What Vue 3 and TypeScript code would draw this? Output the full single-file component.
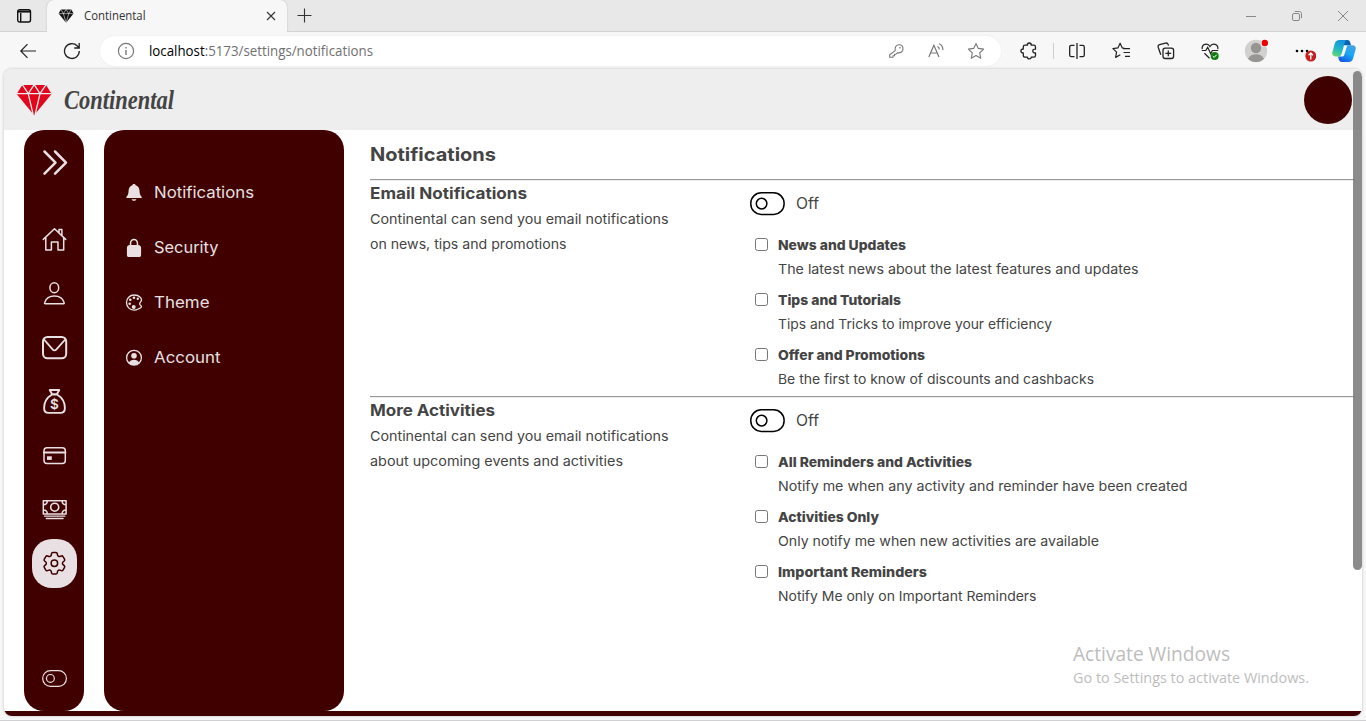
<script setup lang="ts">
interface Choice { title: string; titleWidth: number; text: string; textWidth: number }
interface Group { title: string; titleWidth: number; lines: { text: string; width: number }[]; choices: Choice[] }

const groups: Group[] = [
  {
    title: 'Email Notifications', titleWidth: 157,
    lines: [
      { text: 'Continental can send you email notifications', width: 298.5 },
      { text: 'on news, tips and promotions', width: 196.5 },
    ],
    choices: [
      { title: 'News and Updates', titleWidth: 128, text: 'The latest news about the latest features and updates', textWidth: 360.5 },
      { title: 'Tips and Tutorials', titleWidth: 123, text: 'Tips and Tricks to improve your efficiency', textWidth: 274 },
      { title: 'Offer and Promotions', titleWidth: 147, text: 'Be the first to know of discounts and cashbacks', textWidth: 316 },
    ],
  },
  {
    title: 'More Activities', titleWidth: 125,
    lines: [
      { text: 'Continental can send you email notifications', width: 298.5 },
      { text: 'about upcoming events and activities', width: 253 },
    ],
    choices: [
      { title: 'All Reminders and Activities', titleWidth: 194, text: 'Notify me when any activity and reminder have been created', textWidth: 409.5 },
      { title: 'Activities Only', titleWidth: 101, text: 'Only notify me when new activities are available', textWidth: 321 },
      { title: 'Important Reminders', titleWidth: 149, text: 'Notify Me only on Important Reminders', textWidth: 258.5 },
    ],
  },
]

const rail: { name: string; svg: string; active?: boolean }[] = [
  { name: 'Home', svg: '<path stroke-width="1.5" d="M3.3 13.4 14.5 2.8l11.2 10.6M5.8 11.5V24h5.6v-8H18v8h5.7V11.5M19 6.5V3.4h2.9v6"/>' },
  { name: 'Profile', svg: '<ellipse cx="14.3" cy="7.8" rx="4.4" ry="5" stroke-width="1.5"/><path stroke-width="1.5" d="M5.3 23.7c-.7 0-.9-.5-.6-1.3 1.3-4 5.2-6.5 9.7-6.5s8.4 2.5 9.7 6.5c.3.8.1 1.3-.6 1.3z"/>' },
  { name: 'Mail', svg: '<rect x="3" y="3" width="23.2" height="21.3" rx="4.5" stroke-width="2"/><path stroke-width="1.8" d="m4 5.5 8.8 10.1c1 1.1 2.4 1.1 3.4 0L25.2 5.5"/>' },
  { name: 'Savings', svg: '<path stroke-width="1.9" d="M9.7 2h9.6l-2.5 4.300h-4.600zM12 6.500C7 9.500 4.100 14.500 4.100 20c0 3.600 1.700 4.900 4.600 4.900h11.600c2.900 0 4.600-1.300 4.600-4.900 0-5.500-2.900-10.500-7.900-13.500z"/><text x="14.500" y="21.300" text-anchor="middle" font-family="Inter, sans-serif" font-size="13.500" font-weight="600" fill="#e8e0e2" stroke="none">$</text>' },
  { name: 'Cards', svg: '<rect x="4" y="5.7" width="21.3" height="15.8" rx="3" stroke-width="1.5"/><path stroke-width="2.2" d="M4 10.5h21.3"/><path fill="#e8e0e2" stroke="none" d="M7 14.3h4.8v3.6H7z"/>' },
  { name: 'Cash', svg: '<path stroke-width="1.5" d="M3.3 4.7h22.8v13.2H3.3zM3.3 8.7c2.5 0 4-1.5 4-4M22.1 4.7c0 2.5 1.5 4 4 4M3.3 13.9c2.5 0 4 1.5 4 4M22.1 17.9c0-2.5 1.5-4 4-4"/><circle cx="14.7" cy="11.2" r="4" stroke-width="1.6"/><path stroke-width="1.3" d="M4.6 20.2h20.2M6.3 22.5h16.800"/>' },
  { name: 'Settings', active: true, svg: '<g transform="translate(0 -1.1) scale(1.2)" stroke-width="1.25"><path d="M9.594 3.94c.09-.542.56-.94 1.11-.94h2.593c.55 0 1.02.398 1.11.94l.213 1.281c.063.374.313.686.645.87.074.04.147.083.22.127.325.196.72.257 1.075.124l1.217-.456a1.125 1.125 0 0 1 1.37.49l1.296 2.247a1.125 1.125 0 0 1-.26 1.431l-1.003.827c-.293.241-.438.613-.43.992a7.723 7.723 0 0 1 0 .255c-.008.378.137.75.43.991l1.004.827c.424.35.534.955.26 1.43l-1.298 2.247a1.125 1.125 0 0 1-1.369.491l-1.217-.456c-.355-.133-.75-.072-1.076.124a6.47 6.47 0 0 1-.22.128c-.331.183-.581.495-.644.869l-.213 1.281c-.09.543-.56.94-1.11.94h-2.594c-.55 0-1.019-.398-1.11-.94l-.213-1.281c-.062-.374-.312-.686-.644-.87a6.52 6.52 0 0 1-.22-.127c-.325-.196-.72-.257-1.076-.124l-1.217.456a1.125 1.125 0 0 1-1.369-.49l-1.297-2.247a1.125 1.125 0 0 1 .26-1.431l1.004-.827c.292-.24.437-.613.43-.991a6.932 6.932 0 0 1 0-.255c.007-.38-.138-.751-.43-.992l-1.004-.827a1.125 1.125 0 0 1-.26-1.43l1.297-2.247a1.125 1.125 0 0 1 1.37-.491l1.216.456c.356.133.751.072 1.076-.124.072-.044.146-.086.22-.128.332-.183.582-.495.644-.869z"/><circle cx="12" cy="12" r="2.7"/></g>' },
]

const menu = [
  { label: 'Notifications', width: 100, svg: '<path d="M9 .9c.9 0 1.5.5 1.6 1.3 2.5.7 3.8 2.7 3.9 5.3.1 3.2.7 5 2.2 6.3v1.3H1.4v-1.3c1.5-1.3 2.1-3.1 2.200-6.300.1-2.600 1.400-4.600 3.800-5.300C7.500 1.400 8.100.9 9 .9zM6.600 16.300h4.800c-.4 1-1.200 1.500-2.400 1.500s-2-.5-2.400-1.500z"/>' },
  { label: 'Security', width: 64.5, svg: '<path d="M4.8 7V5.300C4.800 2.600 6.600.8 9 .8s4.200 1.800 4.200 4.500V7c2 .2 2.900 1.100 2.900 3.200v6.200c0 2-1 2.900-3 2.900H4.900c-2 0-3-.9-3-2.900v-6.200c0-2.100.9-3 2.900-3.200zm1.500 0h5.400V5.200c0-1.800-1.100-3-2.700-3S6.300 3.400 6.300 5.200z"/>' },
  { label: 'Theme', width: 55.5, svg: '<g transform="translate(0 .5)"><path fill="none" stroke="currentColor" stroke-width="1.3" d="M9.2 1.500C4.700 1.500 1.500 4.800 1.500 9s3.200 7.600 7.500 7.600c1.500 0 2.600-.3 4.200-1.100 1.900-.9 3.200-.9 3.200-2.200 0-1.200-1.200-1.500-1.700-2.600-.4-1.100.4-1.700 1.100-2.600 1-1.300.8-3-.6-4.400-1.500-1.500-3.600-2.200-6-2.200z"/><circle cx="9" cy="4.200" r="1.300"/><circle cx="12.800" cy="5.300" r="1.200"/><circle cx="5.300" cy="6.200" r="1.300"/><circle cx="4.700" cy="10.200" r="1.300"/><circle cx="8.700" cy="13.500" r="2"/></g>' },
  { label: 'Account', width: 66.5, svg: '<g transform="translate(0 .8)"><circle cx="9" cy="9" r="7.4" fill="none" stroke="currentColor" stroke-width="1.3"/><circle cx="9" cy="6.900" r="2.800"/><path d="M3.800 14.200c.8-2.300 2.900-3.300 5.200-3.300s4.400 1 5.200 3.300C12.700 15.700 11 16.300 9 16.300s-3.700-.6-5.200-2.100z"/></g>' },
]

// Stretches or condenses a label so that it takes exactly the given width.
const vFit = {
  mounted(el: HTMLElement, binding: { value: number }) {
    const natural = el.getBoundingClientRect().width
    el.style.transform = `scaleX(${binding.value / natural})`
  },
}
</script>

<template>
  <div class="window">
    <div class="titlebar">
      <div class="workspaces">
        <svg width="16" height="16" viewBox="0 0 16 16" fill="none" stroke="#111" stroke-width="1.4"><rect x="1.7" y="1.7" width="12.8" height="12.3" rx="2" /><path d="M1.7 3.600h12.800" stroke-width="2" /><path d="M4.700 5v9" /></svg>
      </div>
      <div class="tab">
        <svg class="favicon" width="16" height="14" viewBox="0 0 36 32"><path fill="#111" d="M6.5 1h23.800l5 9.500-17 21L1 10.500z" /><path fill="none" stroke="#f7f7f7" stroke-width="1.3" d="M1 10.500h34.500M6.500 1l5.500 9.500L18.300 1l6 9.500L30 1M12 10.500l6.300 21 6-21" /></svg>
        <span class="tab-title"><span v-fit="61.5" class="fit">Continental</span></span>
        <svg class="close" width="10" height="10" viewBox="0 0 10 10" stroke="#333" stroke-width="1.1"><path d="m1 1 8 8M9 1 1 9" /></svg>
      </div>
      <svg class="plus" width="15" height="15" viewBox="0 0 15 15" stroke="#333" stroke-width="1.1"><path d="M7.5.5v14M.5 7.500h14" /></svg>
      <div class="controls">
        <svg width="12" height="12" viewBox="0 0 12 12" fill="none" stroke="#888"><path d="M1 6.500h10" /></svg>
        <svg width="12" height="12" viewBox="0 0 12 12" fill="none" stroke="#888"><rect x="1.5" y="3.500" width="7" height="7" rx="1.500" /><path d="M3.800 1.500h4.400c1.400 0 2.300.9 2.300 2.300v4.400" /></svg>
        <svg width="12" height="12" viewBox="0 0 12 12" fill="none" stroke="#888"><path d="m1 1 10 10M11 1 1 11" /></svg>
      </div>
    </div>

    <div class="toolbar">
      <svg class="back" width="18" height="16" viewBox="0 0 18 16" fill="none" stroke="#222" stroke-width="1.2"><path d="M8.500 1.200 1.800 8l6.700 6.800M2 8h15" /></svg>
      <svg class="reload" width="18" height="18" viewBox="0 0 18 18" fill="none" stroke="#222" stroke-width="1.300"><path d="M16.300 9a7.400 7.400 0 1 1-2.200-5.200l2 2M16.200 1v5h-5" /></svg>
      <div class="address">
        <svg width="18" height="18" viewBox="0 0 18 18" fill="none" stroke="#777"><circle cx="9" cy="9" r="7.600" stroke-width="1.200" /><path d="M9 8v5M9 5v1.500" stroke-width="1.400" /></svg>
        <span class="url"><span v-fit="224" class="fit"><b>localhost</b>:5173/settings/notifications</span></span>
        <div class="address-icons">
          <svg width="18" height="18" viewBox="0 0 18 18" fill="none" stroke="#777" stroke-width="1.100" stroke-linejoin="round"><path d="M8.200 8.600C7.600 5.300 9 2.700 12 2.700c2.500 0 4 1.700 4 4 0 2.900-2.300 4.700-5.600 4.100L9 12.200H7.500v1.600H6v1.500H2.700v-2.600z" /><circle cx="13" cy="5.800" r=".8" fill="#777" stroke="none" /></svg>
          <svg width="18" height="18" viewBox="0 0 18 18" fill="none" stroke="#777" stroke-width="1.200"><path d="M1.800 15 6.900 3.200 12 15M3.600 11h6.600M10.500 4.500c1.200.6 1.700 1.500 1.800 2.900M12 1.700c2.700 1 3.900 3.200 3.900 6.200" /></svg>
          <svg width="18" height="18" viewBox="0 0 18 18" fill="none" stroke="#777" stroke-width="1.100" stroke-linejoin="round"><path d="m9 1.500 2.300 4.900 5.300.7-3.900 3.700 1 5.400L9 13.600l-4.700 2.600 1-5.400-3.900-3.700 5.300-.7z" /></svg>
        </div>
      </div>
      <div class="tools">
        <svg class="extensions" width="20" height="20" viewBox="0 0 20 20" fill="none" stroke="#222" stroke-width="1.300" stroke-linejoin="round"><path d="M8.300 4.200c0-1.500.8-2.200 2-2.200s2 .7 2 2.200h2.500c1 0 1.700.7 1.700 1.700v2.300c-1.800-.2-2.700.6-2.700 1.900s.9 2 2.700 1.900v2.500c0 1-.7 1.700-1.700 1.700h-2.600c0 1-.7 1.700-1.900 1.700s-1.900-.7-1.900-1.700H6c-1 0-1.700-.7-1.700-1.700V12c-1.600 0-2.400-.8-2.400-2s.8-2 2.400-2V5.900c0-1 .7-1.700 1.700-1.700z" /></svg>
        <i class="divider"></i>
        <svg width="20" height="20" viewBox="0 0 20 20" fill="none" stroke="#222" stroke-width="1.300"><path d="M7.500 4.400H4.300c-1 0-1.600.6-1.600 1.600v8c0 1 .6 1.600 1.600 1.600h3.200M12.500 4.400h3.200c1 0 1.600.6 1.600 1.600v8c0 1-.6 1.600-1.600 1.600h-3.200M10 2v16" /></svg>
        <svg width="20" height="20" viewBox="0 0 20 20" fill="none" stroke="#222" stroke-width="1.200" stroke-linejoin="round"><path d="m12.500 7.300-2.200-.4L8.100 2.200 5.900 6.900l-5 .7 3.700 3.500-1 5.300 4.700-2.600M11 7.700h7M11.500 11.500h6.500M13 15.300h5" /></svg>
        <svg width="20" height="20" viewBox="0 0 20 20" fill="none" stroke="#222" stroke-width="1.300"><rect x="7" y="7.200" width="10.600" height="10.300" rx="2.200" /><path d="M12.300 9.500v5.800M9.400 12.400h5.800M4.800 13.700 2.200 6.300c-.4-1.300.1-2.300 1.400-2.700l5.900-1.500c1.200-.3 2.200.2 2.600 1.300l.4 1.200" /></svg>
        <svg width="20" height="20" viewBox="0 0 20 20" fill="none" stroke="#222" stroke-width="1.200"><path d="M2.200 8.200c-.8-5 5.400-7 7.800-2.700 2.400-4.300 8.600-2.300 7.800 2.700M1.800 9.500h4l1.900-3.300 3 6.500 1.600-3.200h5.900M4.400 12.300l5.100 4.900" /><circle cx="14.700" cy="15" r="4" fill="#107c10" stroke="none" /><path d="m12.800 15.100 1.400 1.300 2.500-2.700" stroke="#fff" stroke-width="1" /></svg>
        <svg width="24" height="24" viewBox="0 0 24 24"><circle cx="12" cy="12" r="11.200" fill="#d2d0ce" /><circle cx="12" cy="9" r="5.200" fill="#979593" /><path d="M4 19.700c1.700-3.300 4.500-4.500 8-4.500s6.300 1.200 8 4.500a11.200 11.200 0 0 1-16 0z" fill="#979593" /><circle cx="20.800" cy="4" r="4" fill="#f7f7f7" /><circle cx="20.800" cy="4" r="3.200" fill="#e80000" /></svg>
        <svg class="more" width="24" height="24" viewBox="0 0 24 24"><circle cx="5" cy="12" r="1.300" /><circle cx="10" cy="12" r="1.300" /><circle cx="15" cy="12" r="1.300" /><circle cx="18.800" cy="17" r="5.500" fill="#c42020" /><path d="M18.800 20.500v-6.400m-2.200 2.100 2.200-2.200 2.200 2.200" fill="none" stroke="#fff" stroke-width="1.300" /></svg>
        <svg width="24" height="24" viewBox="0 0 24 24">
          <defs>
            <linearGradient id="copilot-left" x1=".5" y1="0" x2=".2" y2="1"><stop offset="0" stop-color="#1592e0" /><stop offset=".5" stop-color="#1fb6c9" /><stop offset="1" stop-color="#65d96f" /></linearGradient>
            <linearGradient id="copilot-right" x1=".8" y1="0" x2=".3" y2="1"><stop offset="0" stop-color="#4b9fe0" /><stop offset=".5" stop-color="#18a8f5" /><stop offset="1" stop-color="#1457e4" /></linearGradient>
          </defs>
          <path fill="#0b62b5" d="M11 1h4.200c2 0 2.700 1.100 3.200 3l.6 2.300h-7z" />
          <path fill="url(#copilot-right)" d="M15.300 6.200h5.200c2.500 0 3.800 1.600 3.100 4.200l-2.300 8.400c-.8 2.900-2.200 4.200-4.700 4.200H10c-2.300 0-2.800-1.200-3.400-3.200L6 17.500h4.300c1.200 0 1.700-.7 2-1.800z" />
          <path fill="url(#copilot-left)" d="M7.600 1h7c-1.100.5-1.600 1.600-2 3l-2.800 10.300c-.5 1.900-1.300 3.100-3.200 3.100h-3C1 17.400-.3 15.600.4 13l2.300-8.200C3.500 2.100 5 1 7.600 1z" />
        </svg>
      </div>
    </div>

    <div class="page">
      <header class="header">
        <svg width="36" height="32" viewBox="0 0 36 32"><path fill="#e3051b" d="M6.300 1h23.800l5.500 8.900-17.500 21.400L.7 9.900z" /><path fill="none" stroke="#eee" stroke-width="1.300" d="M.7 9.600h35M6.300.6l6 9L18.200.6l5.800 9L30.100.6M12.200 9.600l5 21M24 9.600l-4.900 21" /></svg>
        <span class="brand"><span v-fit="110" class="fit">Continental</span></span>
        <div class="avatar"></div>
      </header>

      <div class="body">
        <nav class="rail">
          <svg class="expand" width="28" height="28" viewBox="0 0 28 28"><path d="m4.500 3.500 11 11.100-11 11.100M15 3.500l11 11.100-11 11.100" stroke-width="2.500" /></svg>
          <div v-for="item in rail" :key="item.name" class="rail-item" :class="{ active: item.active }">
            <svg width="28" height="28" viewBox="0 0 28 28" v-html="item.svg"></svg>
          </div>
          <svg class="mode" width="28" height="20" viewBox="0 0 28 20"><rect x="2.700" y="2.600" width="23.700" height="15.800" rx="7.800" stroke-width="1.200" /><circle cx="10.400" cy="10.400" r="3.900" stroke-width="1.200" /></svg>
        </nav>

        <aside class="menu">
          <div v-for="item in menu" :key="item.label" class="menu-item">
            <svg width="18" height="19" viewBox="0 0 18 19" v-html="item.svg"></svg>
            <span><span v-fit="item.width" class="fit">{{ item.label }}</span></span>
          </div>
        </aside>

        <main class="content">
          <h1><span v-fit="126" class="fit">Notifications</span></h1>
          <section v-for="group in groups" :key="group.title" class="group">
            <div class="about">
              <h2><span v-fit="group.titleWidth" class="fit">{{ group.title }}</span></h2>
              <p v-for="line in group.lines" :key="line.text"><span v-fit="line.width" class="fit">{{ line.text }}</span></p>
            </div>
            <div class="options">
              <div class="switch">
                <svg width="37" height="26" viewBox="0 0 37 26" fill="none" stroke="#000" stroke-width="1.500"><rect x="1.800" y="1.800" width="33.300" height="21.600" rx="10.500" /><circle cx="12.600" cy="12.600" r="5.300" /></svg>
                <span v-fit="23" class="fit">Off</span>
              </div>
              <label v-for="choice in group.choices" :key="choice.title" class="choice">
                <input type="checkbox">
                <span class="choice-text">
                  <strong><span v-fit="choice.titleWidth" class="fit">{{ choice.title }}</span></strong>
                  <small><span v-fit="choice.textWidth" class="fit">{{ choice.text }}</span></small>
                </span>
              </label>
            </div>
          </section>
        </main>
      </div>
      <footer class="footer"></footer>
      <div class="scrollbar"></div>
      <div class="activation">
        <div class="activation-title"><span v-fit="157" class="fit">Activate Windows</span></div>
        <div class="activation-text"><span v-fit="236" class="fit">Go to Settings to activate Windows.</span></div>
      </div>
    </div>
  </div>
</template>

<style>
body { overflow: hidden; }
</style>

<style scoped>
* { box-sizing: border-box; }
.window {
  width: 1366px; height: 721px; display: flex; flex-direction: column;
  background: #f7f7f7; border-bottom: 1px solid #d0d0d3; overflow: hidden;
  font-family: Inter, "Open Sans", sans-serif; color: #444;
}
.window svg { display: block; flex: none; }
.fit { display: inline-block; white-space: nowrap; transform-origin: 0 50%; }

.titlebar { height: 32px; flex: none; display: flex; background: #e8e8e8; box-shadow: inset 0 -1px #d4d4d4; font-family: "Open Sans", sans-serif; }
.workspaces { width: 47px; padding: 8px 0 0 16px; }
.tab {
  width: 240px; height: 32px; background: #f7f7f7; border-radius: 7px 7px 0 0;
  display: flex; align-items: center; padding: 0 11px; box-shadow: 0 0 2px #bbb;
}
.tab-title { margin-left: 10px; flex: 1; font-size: 12px; color: #333; line-height: 16px; }
.plus { margin: 8px 0 0 10px; }
.controls { margin-left: auto; display: flex; gap: 34px; padding: 10px 17px 0 0; }

.toolbar { height: 37px; flex: none; display: flex; align-items: center; background: #f7f7f7; font-family: "Open Sans", sans-serif; }
.back { margin-left: 19px; }
.reload { margin-left: 26px; }
.address { width: 901px; height: 30px; flex: none; margin-left: 19px; border-radius: 15px; background: #fff; display: flex; align-items: center; padding: 0 16px 0 17px; box-shadow: 0 0 2px #e8e8e8; }
.url { margin-left: 14px; font-size: 14px; color: #707070; }
.url b { font-weight: 400; color: #000; }
.address-icons { margin-left: auto; display: flex; gap: 22px; }
.tools { flex: none; display: grid; grid-template-columns: 50px 4px 44px 45px 44px 44px 48px 44px 40px; align-items: center; justify-items: center; }
.extensions { margin-left: 6px; }
.more { margin-left: 3px; }
.divider { width: 1px; height: 16px; background: #ccc; }

.page { position: relative; width: 1358px; height: 647px; margin-left: 4px; border-radius: 8px; overflow: hidden; background: #fff; display: flex; flex-direction: column; box-shadow: 0 0 3px #bbb; }
.header { height: 61px; flex: none; background: #eee; display: flex; align-items: center; padding: 0 10px 0 12px; }
.brand { margin: 1px 0 0 12px; font: italic 700 27px/36px "Liberation Serif", serif; color: #444; }
.avatar { margin-left: auto; width: 48px; height: 48px; border-radius: 50%; background: #400000; margin-top: 1px; }
.body { height: 581px; flex: none; display: flex; padding-left: 20px; }
.rail { width: 60px; border-radius: 20px; background: #400000; display: flex; flex-direction: column; align-items: center; padding-top: 18px; color: #e8e0e2; }
.rail svg { fill: none; stroke: currentColor; stroke-linecap: round; stroke-linejoin: round; }
.expand { margin-bottom: 37px; }
.rail-item { height: 54px; width: 60px; display: flex; align-items: center; justify-content: center; }
.rail-item.active { width: 45px; height: 49px; margin: 2px 0 3px 1px; border-radius: 20px; background: #e8e0e2; color: #400000; }
.rail-item.active svg { margin-right: 1px; }
.mode { margin-top: 77px; }
.menu { width: 240px; margin-left: 20px; border-radius: 20px; background: #400000; padding: 35px 0 0 21px; color: #e8e0e2; }
.menu-item { height: 55px; display: flex; align-items: center; font-size: 15.5px; line-height: 20px; }
.menu-item > svg { fill: currentColor; }
.menu-item > span { margin-left: 11px; }

.content { width: 985px; margin-left: 26px; flex: none; }
h1 { margin: 0; height: 49px; font-size: 18.5px; font-weight: 700; line-height: 49px; }
.group { display: flex; height: 217px; border-top: 1px solid #999; box-shadow: inset 0 1px #eee; }
.about { width: 379px; padding-top: 2px; }
h2 { margin: 0; height: 24px; line-height: 24px; font-size: 15.7px; font-weight: 700; }
p { margin: 0; height: 25px; line-height: 27px; font-size: 13.3px; }
.options { padding-top: 10px; }
.switch { display: flex; align-items: center; height: 27px; gap: 10px; font-size: 15.5px; }
.choice { display: flex; height: 55px; padding-left: 6px; }
.choice:first-of-type { margin-top: 14px; }
input { width: 13px; height: 13px; margin: 7px 10px 0 0; flex: none; }
.choice-text { display: flex; flex-direction: column; padding-top: 2px; }
strong { height: 24px; line-height: 25px; font-size: 13.3px; font-weight: 800; }
small { height: 24px; line-height: 25px; font-size: 13.3px; }
.footer { height: 5px; flex: none; background: #400000; }
.scrollbar { position: absolute; top: 2px; right: 0; width: 9px; height: 499px; border-radius: 5px; background: rgba(119, 119, 119, .85); }
.activation { position: absolute; left: 1069px; top: 571px; color: #bdbdbd; font-family: "Open Sans", sans-serif; white-space: nowrap; }
.activation-title { font-size: 20px; line-height: 28px; }
.activation-text { font-size: 15px; line-height: 18px; }
</style>
